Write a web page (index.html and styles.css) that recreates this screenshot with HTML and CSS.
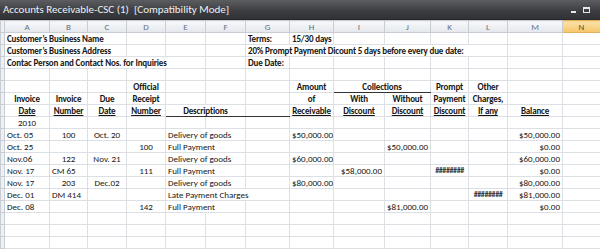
FILE: index.html
```html
<!DOCTYPE html>
<html lang="en">
<head>
    <meta charset="UTF-8">
    <meta name="viewport" content="width=device-width, initial-scale=1.0">
    <title>Accounts Receivable-CSC (1)</title>
    <link rel="stylesheet" href="styles.css">
</head>
<body>

    <div class="titlebar">
        <span class="title">Accounts Receivable-CSC (1)&nbsp; [Compatibility Mode]</span>
        <span class="controls">
            <span class="ctl-min"></span>
            <span class="ctl-max"></span>
        </span>
    </div>

    <table class="sheet">
        <colgroup>
            <col style="width:4px"><col style="width:45px"><col style="width:38px"><col style="width:39px">
            <col style="width:39px"><col style="width:40px"><col style="width:40px"><col style="width:44px">
            <col style="width:44px"><col style="width:51px"><col style="width:46px"><col style="width:38px">
            <col style="width:39px"><col style="width:55px"><col style="width:38px">
        </colgroup>
        <thead>
            <tr>
                <th class="rh"></th>
                <th>A</th><th>B</th><th>C</th><th>D</th><th>E</th><th>F</th><th>G</th>
                <th>H</th><th>I</th><th>J</th><th>K</th><th>L</th><th>M</th><th class="sel">N</th>
            </tr>
        </thead>
        <tbody>
            <tr>
                <td class="rh"></td>
                <td class="b" colspan="3">Customer’s Business Name</td>
                <td></td><td></td><td></td>
                <td class="b">Terms:</td>
                <td class="b">15/30 days</td>
                <td></td><td></td><td></td><td></td><td></td><td></td>
            </tr>
            <tr>
                <td class="rh"></td>
                <td class="b" colspan="3">Customer’s Business Address</td>
                <td></td><td></td><td></td>
                <td class="b" colspan="6">20% Prompt Payment Dicount 5 days before every due date:</td>
                <td></td><td></td>
            </tr>
            <tr>
                <td class="rh"></td>
                <td class="b" colspan="5">Contac Person and Contact Nos. for Inquiries</td>
                <td></td>
                <td class="b">Due Date:</td>
                <td></td><td></td><td></td><td></td><td></td><td></td><td></td>
            </tr>
            <tr>
                <td class="rh"></td>
                <td></td><td></td><td></td><td></td><td></td><td></td><td></td>
                <td></td><td></td><td></td><td></td><td></td><td></td><td></td>
            </tr>
            <tr>
                <td class="rh"></td>
                <td></td><td></td><td></td>
                <td class="b c">Official</td>
                <td></td><td></td><td></td>
                <td class="b c">Amount</td>
                <td class="b c rule" colspan="2">Collections</td>
                <td class="b c">Prompt</td>
                <td class="b c">Other</td>
                <td></td><td></td>
            </tr>
            <tr>
                <td class="rh"></td>
                <td class="b c">Invoice</td>
                <td class="b c">Invoice</td>
                <td class="b c">Due</td>
                <td class="b c">Receipt</td>
                <td></td><td></td><td></td>
                <td class="b c">of</td>
                <td class="b c">With</td>
                <td class="b c">Without</td>
                <td class="b c">Payment</td>
                <td class="b c">Charges,</td>
                <td></td><td></td>
            </tr>
            <tr>
                <td class="rh"></td>
                <td class="b c u">Date</td>
                <td class="b c u">Number</td>
                <td class="b c u">Date</td>
                <td class="b c u">Number</td>
                <td class="b c rule" colspan="2">Descriptions</td>
                <td class="rule"></td>
                <td class="b c u">Receivable</td>
                <td class="b c u">Discount</td>
                <td class="b c u">Discount</td>
                <td class="b c u">Discount</td>
                <td class="b c u">If any</td>
                <td class="b c u">Balance</td>
                <td></td>
            </tr>
            <tr>
                <td class="rh"></td>
                <td class="c">2010</td>
                <td></td><td></td><td></td><td></td><td></td><td></td>
                <td></td><td></td><td></td><td></td><td></td><td></td><td></td>
            </tr>
            <tr>
                <td class="rh"></td>
                <td>Oct. 05</td>
                <td class="c">100</td>
                <td class="c">Oct. 20</td>
                <td></td>
                <td colspan="2">Delivery of goods</td>
                <td></td>
                <td class="r">$50,000.00</td>
                <td></td><td></td><td></td><td></td>
                <td class="r">$50,000.00</td>
                <td></td>
            </tr>
            <tr>
                <td class="rh"></td>
                <td>Oct. 25</td>
                <td></td><td></td>
                <td class="c">100</td>
                <td colspan="2">Full Payment</td>
                <td></td><td></td><td></td>
                <td class="r">$50,000.00</td>
                <td></td><td></td>
                <td class="r">$0.00</td>
                <td></td>
            </tr>
            <tr>
                <td class="rh"></td>
                <td>Nov.06</td>
                <td class="c">122</td>
                <td class="c">Nov. 21</td>
                <td></td>
                <td colspan="2">Delivery of goods</td>
                <td></td>
                <td class="r">$60,000.00</td>
                <td></td><td></td><td></td><td></td>
                <td class="r">$60,000.00</td>
                <td></td>
            </tr>
            <tr>
                <td class="rh"></td>
                <td>Nov. 17</td>
                <td>CM 65</td>
                <td></td>
                <td class="c">111</td>
                <td colspan="2">Full Payment</td>
                <td></td><td></td>
                <td class="r">$58,000.00</td>
                <td></td>
                <td class="c hash">########</td>
                <td></td>
                <td class="r">$0.00</td>
                <td></td>
            </tr>
            <tr>
                <td class="rh"></td>
                <td>Nov. 17</td>
                <td class="c">203</td>
                <td class="c">Dec.02</td>
                <td></td>
                <td colspan="2">Delivery of goods</td>
                <td></td>
                <td class="r">$80,000.00</td>
                <td></td><td></td><td></td><td></td>
                <td class="r">$80,000.00</td>
                <td></td>
            </tr>
            <tr>
                <td class="rh"></td>
                <td>Dec. 01</td>
                <td>DM 414</td>
                <td></td><td></td>
                <td colspan="3">Late Payment Charges</td>
                <td></td><td></td><td></td><td></td>
                <td class="c hash">########</td>
                <td class="r">$81,000.00</td>
                <td></td>
            </tr>
            <tr>
                <td class="rh"></td>
                <td>Dec. 08</td>
                <td></td><td></td>
                <td class="c">142</td>
                <td colspan="2">Full Payment</td>
                <td></td><td></td><td></td>
                <td class="r">$81,000.00</td>
                <td></td><td></td>
                <td class="r">$0.00</td>
                <td></td>
            </tr>
            <tr>
                <td class="rh"></td>
                <td></td><td></td><td></td><td></td><td></td><td></td><td></td>
                <td></td><td></td><td></td><td></td><td></td><td></td><td></td>
            </tr>
            <tr>
                <td class="rh"></td>
                <td></td><td></td><td></td><td></td><td></td><td></td><td></td>
                <td></td><td></td><td></td><td></td><td></td><td></td><td></td>
            </tr>
            <tr>
                <td class="rh"></td>
                <td></td><td></td><td></td><td></td><td></td><td></td><td></td>
                <td></td><td></td><td></td><td></td><td></td><td></td><td></td>
            </tr>
        </tbody>
    </table>

</body>
</html>
```

FILE: styles.css
```css
* {
    box-sizing: border-box;
}

body {
    margin: 0;
    background: #fff;
    overflow: hidden;
    font-family: Carlito, Lato, "Liberation Sans", sans-serif;
}

.titlebar {
    height: 20px;
    display: flex;
    align-items: center;
    justify-content: space-between;
    padding: 0 10px 0 3px;
    color: #eef0f2;
    font-size: 11px;
    background: linear-gradient(#5b5d61, #3a3c40 60%, #303236);
    border-bottom: 1px solid #25272a;
}

.controls {
    display: flex;
    align-items: center;
    gap: 7px;
}

.ctl-min {
    width: 5px;
    height: 2px;
    margin-top: 5px;
    background: #e8e8e8;
}

.ctl-max {
    width: 7px;
    height: 6px;
    border: 1px solid #e8e8e8;
    border-top-width: 2px;
}

.sheet {
    width: 600px;
    border-collapse: collapse;
    table-layout: fixed;
    font-size: 9px;
    color: #161616;
}

.sheet th {
    height: 12px;
    padding: 0;
    font-size: 9px;
    font-weight: normal;
    line-height: 11px;
    color: #66707c;
    background: linear-gradient(#f8f9fb, #e3e7ed);
    border: 1px solid #c8cdd4;
}

.sheet th.sel {
    color: #5a4a2a;
    background: linear-gradient(#fbe2a9, #f6c66a);
    border-color: #e4b25e;
}

.sheet td {
    height: 12px;
    padding: 0 2px;
    line-height: 11px;
    white-space: nowrap;
    overflow: hidden;
    vertical-align: bottom;
    border: 1px solid #dcdfe3;
}

.sheet .rh {
    padding: 0;
    background: #eef0f3;
    border-color: #c8cdd4;
}

.b {
    font-weight: bold;
    letter-spacing: -0.15px;
}

.c {
    text-align: center;
}

.r {
    text-align: right;
}

.u {
    text-decoration: underline;
}

.sheet td.rule {
    border-bottom: 1px solid #333;
}

.hash {
    font-size: 8px;
    font-weight: bold;
    letter-spacing: -0.4px;
    color: #333;
}
```
